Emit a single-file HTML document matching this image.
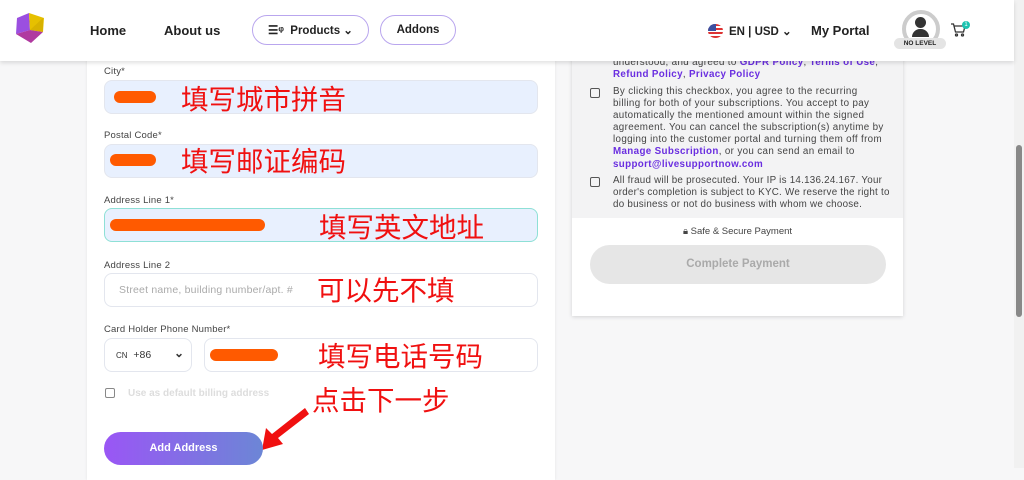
<!DOCTYPE html>
<html><head><meta charset="utf-8"><style>
*{box-sizing:border-box;margin:0;padding:0}
body{width:1024px;height:468px;overflow:hidden;background:#f7f7f8;font-family:"Liberation Sans","Noto Sans CJK SC",sans-serif;position:relative;color:#333}
.a{position:absolute}
.hdr{left:0;top:0;width:1014px;height:61px;background:#fff;box-shadow:0 2px 4px rgba(0,0,0,.12);z-index:5}
.nav{font-weight:bold;font-size:13px;color:#222}
.pill{border:1px solid #b9a6ee;border-radius:16px;height:30px;top:15px;font-weight:bold;font-size:11.5px;display:flex;align-items:center;justify-content:center;color:#222}
.card{left:87px;top:40px;width:468px;height:440px;background:#fff;box-shadow:0 0 3px rgba(0,0,0,.08)}
.lbl{font-size:9.5px;color:#444;left:104px;letter-spacing:.2px}
.in{left:104px;width:434px;height:34px;border:1px solid #e3e6ee;border-radius:8px;background:#e8f0fe}
.red{color:#f01010;font-size:27.5px;font-family:"Noto Sans CJK SC",sans-serif;line-height:1;white-space:nowrap}
.blob{background:#ff5a00;border-radius:8px;height:12px}
.rc{left:572px;top:40px;width:331px;height:276px;background:#fff;box-shadow:0 1px 4px rgba(0,0,0,.15)}
.gray{left:572px;top:40px;width:331px;height:178px;background:#f3f3f4}
.t{font-size:9.8px;line-height:12.1px;color:#444;left:613px;width:272px;letter-spacing:.35px}
.t b{color:#6a2ee0}
.cb{left:590px;width:10px;height:10px;border:1px solid #555;border-radius:2px}
</style></head><body>
<div class="a hdr">
 <svg class="a" style="left:13px;top:12px" width="34" height="32" viewBox="0 0 34 32"><polygon points="4,6 16,1 17,18 3,22" fill="#9b4fe0"/><polygon points="16,1 31,6 30,20 17,18" fill="#e6c000"/><polygon points="3,22 17,18 30,20 18,31" fill="#b03aa0"/><polygon points="17,18 30,6 30,20" fill="#c9a400" opacity=".5"/></svg>
 <div class="a nav" style="left:90px;top:23px">Home</div>
 <div class="a nav" style="left:164px;top:23px">About us</div>
 <div class="a pill" style="left:252px;width:117px">☰ᵠ&nbsp; Products ⌄</div>
 <div class="a pill" style="left:380px;width:76px">Addons</div>
 <div class="a" style="left:708px;top:24px;width:15px;height:14px;border-radius:50%;background:repeating-linear-gradient(#d33 0 2px,#fff 2px 4px)"><div style="width:8px;height:7px;background:#3c4fa0;border-radius:7px 0 0 0"></div></div>
 <div class="a nav" style="left:729px;top:24px;font-size:11.5px">EN | USD ⌄</div>
 <div class="a nav" style="left:811px;top:23px">My Portal</div>
 <div class="a" style="left:902px;top:10px;width:38px;height:38px;border:4px solid #ccc;border-radius:50%"></div>
 <div class="a" style="left:915px;top:17px;width:11px;height:11px;border-radius:50%;background:#333"></div>
 <div class="a" style="left:912px;top:29px;width:17px;height:8px;border-radius:8px 8px 0 0;background:#333"></div>
 <div class="a" style="left:894px;top:38px;width:52px;height:11px;border-radius:6px;background:#e4e4e4;font-size:6.5px;font-weight:bold;text-align:center;line-height:11px;color:#222">NO LEVEL</div>
 <svg class="a" style="left:950px;top:22px" width="16" height="16" viewBox="0 0 16 16" fill="none" stroke="#333" stroke-width="1.3"><path d="M1 2h2.5l2 8h8l1.5-6H4.5"/><circle cx="6.5" cy="13" r="1"/><circle cx="12.5" cy="13" r="1"/></svg>
 <div class="a" style="left:962px;top:21px;width:8px;height:8px;border-radius:50%;background:#1cc3b0;font-size:6px;color:#fff;text-align:center;line-height:8px">1</div>
</div>
<div class="a" style="left:1014px;top:0;width:10px;height:468px;background:#f1f1f1"></div>
<div class="a" style="left:1016px;top:145px;width:6px;height:172px;background:#888;border-radius:3px"></div>

<div class="a card"></div>
<div class="a lbl" style="top:66px">City*</div>
<div class="a in" style="top:80px"></div>
<div class="a blob" style="left:114px;top:91px;width:42px"></div>
<div class="a red" style="left:181px;top:84px">填写城市拼音</div>
<div class="a lbl" style="top:130px">Postal Code*</div>
<div class="a in" style="top:144px"></div>
<div class="a blob" style="left:110px;top:154px;width:46px"></div>
<div class="a red" style="left:181px;top:146px">填写邮证编码</div>
<div class="a lbl" style="top:195px">Address Line 1*</div>
<div class="a in" style="top:208px;border-color:#8ee0d6"></div>
<div class="a blob" style="left:110px;top:219px;width:155px"></div>
<div class="a red" style="left:319px;top:212px">填写英文地址</div>
<div class="a lbl" style="top:260px">Address Line 2</div>
<div class="a in" style="top:273px;background:#fff"></div>
<div class="a" style="left:119px;top:284px;font-size:10.5px;color:#aaa;letter-spacing:.2px">Street name, building number/apt. #</div>
<div class="a red" style="left:317px;top:275px">可以先不填</div>
<div class="a lbl" style="top:324px">Card Holder Phone Number*</div>
<div class="a in" style="top:338px;width:88px;background:#fff"></div>
<div class="a" style="left:116px;top:349px;font-size:10.5px;color:#333"><span style="font-size:8px">CN</span>&nbsp; +86</div>
<div class="a" style="left:174px;top:346px;font-size:12px;font-weight:bold">⌄</div>
<div class="a in" style="top:338px;left:204px;width:334px;background:#fff"></div>
<div class="a blob" style="left:210px;top:349px;width:68px"></div>
<div class="a red" style="left:318px;top:341px">填写电话号码</div>
<div class="a" style="left:105px;top:388px;width:10px;height:10px;border:1.5px solid #888;border-radius:2px"></div>
<div class="a" style="left:128px;top:388px;font-size:10px;font-weight:bold;color:#ddd">Use as default billing address</div>
<div class="a red" style="left:312px;top:385px">点击下一步</div>
<svg class="a" style="left:258px;top:406px" width="52" height="48" viewBox="0 0 52 48"><path d="M47 2 L51 8 L20 32 L25 38 L4 44 L8 22 L14 28 Z" fill="#f01010"/></svg>
<div class="a" style="left:104px;top:432px;width:159px;height:33px;border-radius:17px;background:linear-gradient(90deg,#9a56f5,#6c86d6);color:#fff;font-weight:bold;font-size:11px;text-align:center;line-height:33px">Add Address</div>

<div class="a rc"></div>
<div class="a gray"></div>
<div class="a t" style="top:57px">understood, and agreed to <b>GDPR Policy</b>, <b>Terms of Use</b>, <b>Refund Policy</b>, <b>Privacy Policy</b></div>
<div class="a cb" style="top:88px"></div>
<div class="a t" style="top:86px">By clicking this checkbox, you agree to the recurring billing for both of your subscriptions. You accept to pay automatically the mentioned amount within the signed agreement. You can cancel the subscription(s) anytime by logging into the customer portal and turning them off from <b>Manage Subscription</b>, or you can send an email to <b>support@livesupportnow.com</b></div>
<div class="a cb" style="top:177px"></div>
<div class="a t" style="top:175px;width:282px;letter-spacing:.25px">All fraud will be prosecuted. Your IP is 14.136.24.167. Your order's completion is subject to KYC. We reserve the right to do business or not do business with whom we choose.</div>
<div class="a" style="left:572px;top:226px;width:331px;text-align:center;font-size:9.5px;color:#444">🔒︎ Safe &amp; Secure Payment</div>
<div class="a" style="left:590px;top:245px;width:296px;height:39px;border-radius:20px;background:#e6e6e6;color:#aaa;font-weight:bold;font-size:11.5px;text-align:center;line-height:39px">Complete Payment</div>
</body></html>
